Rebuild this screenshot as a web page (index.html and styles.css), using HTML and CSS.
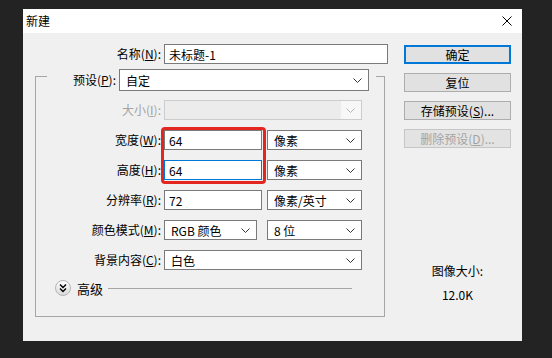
FILE: index.html
```html
<!DOCTYPE html>
<html lang="zh-CN">
<head>
<meta charset="UTF-8">
<title>新建</title>
<link rel="stylesheet" href="styles.css">
</head>
<body>
    <div class="dialog">
        <div class="titlebar">
            <span class="title">新建</span>
            <svg class="close" width="10" height="10" viewBox="0 0 10 10"><path d="M0.5 0.5 L9.5 9.5 M9.5 0.5 L0.5 9.5" stroke="#000" stroke-width="1" fill="none"/></svg>
        </div>
        <div class="content">
            <div class="form">
                <div class="row">
                    <label class="lbl">名称(<u>N</u>):</label>
                    <input type="text" class="field w-name" value="未标题-1">
                </div>
                <fieldset class="group">
                    <legend class="preset">
                        <label class="lbl lbl-preset">预设(<u>P</u>):</label>
                        <div class="combo w-preset"><span>自定</span><svg width="9" height="5" viewBox="0 0 9 5"><path d="M0.5 0.5 L4.5 4.5 L8.5 0.5" stroke="#333" fill="none"/></svg></div>
                    </legend>
                    <div class="row">
                        <label class="lbl off">大小(<u>I</u>):</label>
                        <div class="combo w-wide disabled"><span></span><svg width="9" height="5" viewBox="0 0 9 5"><path d="M0.5 0.5 L4.5 4.5 L8.5 0.5" stroke="#b5b5b5" fill="none"/></svg></div>
                    </div>
                    <div class="row gap-top">
                        <label class="lbl">宽度(<u>W</u>):</label>
                        <input type="text" class="field w-num" value="64">
                        <div class="combo w-unit"><span>像素</span><svg width="9" height="5" viewBox="0 0 9 5"><path d="M0.5 0.5 L4.5 4.5 L8.5 0.5" stroke="#333" fill="none"/></svg></div>
                    </div>
                    <div class="row">
                        <label class="lbl">高度(<u>H</u>):</label>
                        <input type="text" class="field w-num focus" value="64">
                        <div class="combo w-unit"><span>像素</span><svg width="9" height="5" viewBox="0 0 9 5"><path d="M0.5 0.5 L4.5 4.5 L8.5 0.5" stroke="#333" fill="none"/></svg></div>
                    </div>
                    <div class="row">
                        <label class="lbl">分辨率(<u>R</u>):</label>
                        <input type="text" class="field w-num" value="72">
                        <div class="combo w-unit"><span>像素/英寸</span><svg width="9" height="5" viewBox="0 0 9 5"><path d="M0.5 0.5 L4.5 4.5 L8.5 0.5" stroke="#333" fill="none"/></svg></div>
                    </div>
                    <div class="row">
                        <label class="lbl">颜色模式(<u>M</u>):</label>
                        <div class="combo w-mode"><span>RGB 颜色</span><svg width="9" height="5" viewBox="0 0 9 5"><path d="M0.5 0.5 L4.5 4.5 L8.5 0.5" stroke="#333" fill="none"/></svg></div>
                        <div class="combo w-unit"><span>8 位</span><svg width="9" height="5" viewBox="0 0 9 5"><path d="M0.5 0.5 L4.5 4.5 L8.5 0.5" stroke="#333" fill="none"/></svg></div>
                    </div>
                    <div class="row">
                        <label class="lbl">背景内容(<u>C</u>):</label>
                        <div class="combo w-wide"><span>白色</span><svg width="9" height="5" viewBox="0 0 9 5"><path d="M0.5 0.5 L4.5 4.5 L8.5 0.5" stroke="#333" fill="none"/></svg></div>
                    </div>
                    <div class="advanced">
                        <svg width="16" height="16" viewBox="0 0 16 16">
                            <defs>
                                <linearGradient id="adv" x1="0" y1="0" x2="0" y2="1">
                                    <stop offset="0" stop-color="#ffffff"/>
                                    <stop offset="1" stop-color="#d9d9d9"/>
                                </linearGradient>
                            </defs>
                            <circle cx="8" cy="8" r="7.5" fill="url(#adv)" stroke="#b4b4b4"/>
                            <path d="M5 4.5 L8 7.5 L11 4.5 M5 8.5 L8 11.5 L11 8.5" stroke="#000" stroke-width="1.4" fill="none"/>
                        </svg>
                        <span class="adv-text">高级</span>
                        <div class="rule"></div>
                    </div>
                </fieldset>
            </div>
            <div class="side">
                <button class="btn default">确定</button>
                <button class="btn">复位</button>
                <button class="btn">存储预设(<u>S</u>)...</button>
                <button class="btn disabled">删除预设(<u>D</u>)...</button>
                <div class="info">
                    <div>图像大小:</div>
                    <div>12.0K</div>
                </div>
            </div>
        </div>
        <div class="highlight"></div>
    </div>
</body>
</html>
```
FILE: styles.css
```css
body{
    margin: 0;
    background: #232323;
    font-family: "Noto Sans CJK SC", "Noto Sans", sans-serif;
    font-size: 12px;
    color: #000;
}
.dialog{
    position: relative;
    width: 499px;
    height: 332px;
    margin: 9px 0 0 23px;
    background: #f0f0f0;
}
.titlebar{
    height: 24px;
    background: #fff;
    display: flex;
    align-items: center;
    justify-content: space-between;
    padding: 0 10px 0 3px;
}
.title{
    line-height: 24px;
}
.content{
    display: flex;
    padding: 11px 0 0 12px;
}
.form{
    width: 353px;
}
.row{
    display: flex;
    align-items: center;
    height: 20px;
}
.lbl{
    width: 126px;
    margin-right: 3px;
    text-align: right;
    line-height: 20px;
    white-space: nowrap;
}
.lbl.off{
    color: #a3a3a3;
}
.field{
    height: 20px;
    box-sizing: border-box;
    margin: 0;
    padding: 0 4px;
    border: 1px solid #7a7a7a;
    background: #fff;
    font: inherit;
    color: #000;
    outline: none;
}
.field.focus{
    border-color: #0078d7;
}
.w-name{
    width: 224px;
}
.w-num{
    width: 98px;
    margin-right: 5px;
}

/* group box */
.group{
    width: 350px;
    min-width: 0;
    box-sizing: border-box;
    margin: -3px 0 0 0;
    padding: 9px 0 20px 0;
    border: 1px solid #a6a6a6;
}
.group .lbl{
    width: 125px;
}
.group .row{
    margin-bottom: 10px;
}
.group .row.gap-top{
    margin-top: 1px;
}
.preset{
    display: flex;
    align-items: center;
    margin-left: 11px;
    padding: 8px 7px 0 0;
}
.lbl.lbl-preset{
    width: 69px;
}
.combo{
    display: flex;
    align-items: center;
    justify-content: space-between;
    height: 20px;
    box-sizing: border-box;
    padding: 0 6px;
    border: 1px solid #7a7a7a;
    background: #fff;
    white-space: nowrap;
}
.combo.disabled{
    border-color: #cccccc;
    background: linear-gradient(to right, #ececec calc(100% - 20px), #f7f7f7 calc(100% - 20px));
}
.w-preset{
    width: 250px;
    height: 22px;
}
.w-wide{
    width: 198px;
}
.w-unit{
    width: 95px;
}
.w-mode{
    width: 93px;
    margin-right: 10px;
}
.advanced{
    display: flex;
    align-items: center;
    height: 16px;
    margin-top: 10px;
    padding-left: 19px;
}
.adv-text{
    margin-left: 6px;
    font-size: 13px;
}
.rule{
    flex: 1;
    height: 1px;
    margin: 0 32px 0 5px;
    background: #a6a6a6;
}

/* buttons */
.side{
    width: 107px;
    margin-left: 16px;
    padding-top: 1px;
}
.btn{
    display: block;
    width: 107px;
    height: 19px;
    box-sizing: border-box;
    margin: 0 0 9px 0;
    padding: 0;
    border: 1px solid #adadad;
    background: #e1e1e1;
    font: inherit;
    line-height: 17px;
    color: #000;
}
.btn.default{
    border: 2px solid #0078d7;
    line-height: 15px;
}
.btn.disabled{
    border-color: #c6c6c6;
    background: #e3e3e3;
    color: #a3a3a3;
}
.info{
    margin-top: 111px;
    text-align: center;
    line-height: 24px;
}

/* red mark over width/height */
.highlight{
    position: absolute;
    left: 138px;
    top: 118px;
    width: 105px;
    height: 57px;
    box-sizing: border-box;
    border: 3px solid #e3261f;
    border-radius: 4px;
}
```
